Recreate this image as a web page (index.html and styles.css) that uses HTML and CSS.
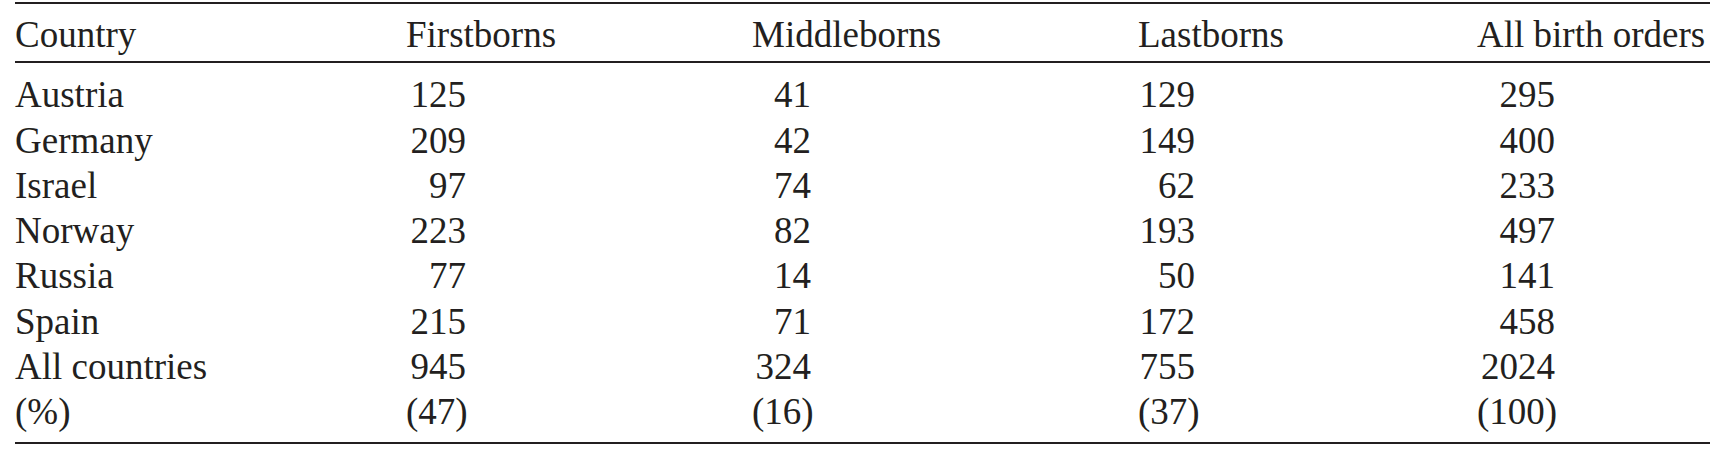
FILE: index.html
```html
<!DOCTYPE html>
<html lang="en">
<head>
<meta charset="utf-8">
<title>Birth order by country</title>
<link rel="stylesheet" href="styles.css">
</head>
<body>
<table class="data">
  <thead>
    <tr>
      <th class="c-country">Country</th>
      <th class="c-first">Firstborns</th>
      <th class="c-middle">Middleborns</th>
      <th class="c-last">Lastborns</th>
      <th class="c-all">All birth orders</th>
    </tr>
  </thead>
  <tbody>
    <tr class="first"><td class="c-country">Austria</td><td class="n-first">125</td><td class="n-middle">41</td><td class="n-last">129</td><td class="n-all">295</td></tr>
    <tr><td class="c-country">Germany</td><td class="n-first">209</td><td class="n-middle">42</td><td class="n-last">149</td><td class="n-all">400</td></tr>
    <tr><td class="c-country">Israel</td><td class="n-first">97</td><td class="n-middle">74</td><td class="n-last">62</td><td class="n-all">233</td></tr>
    <tr><td class="c-country">Norway</td><td class="n-first">223</td><td class="n-middle">82</td><td class="n-last">193</td><td class="n-all">497</td></tr>
    <tr><td class="c-country">Russia</td><td class="n-first">77</td><td class="n-middle">14</td><td class="n-last">50</td><td class="n-all">141</td></tr>
    <tr><td class="c-country">Spain</td><td class="n-first">215</td><td class="n-middle">71</td><td class="n-last">172</td><td class="n-all">458</td></tr>
    <tr><td class="c-country">All countries</td><td class="n-first">945</td><td class="n-middle">324</td><td class="n-last">755</td><td class="n-all">2024</td></tr>
    <tr class="last"><td class="c-country">(%)</td><td class="n-first">(47)</td><td class="n-middle">(16)</td><td class="n-last">(37)</td><td class="n-all">(100)</td></tr>
  </tbody>
</table>
</body>
</html>
```

FILE: styles.css
```css
html, body {
  margin: 0;
  padding: 0;
  background: #ffffff;
}

body {
  padding-top: 2px;
  padding-left: 15px;
  font-family: "Liberation Serif", "Times New Roman", serif;
  font-size: 37px;
  color: #231f20;
}

.data {
  width: 1695px;
  table-layout: fixed;
  border-collapse: separate;
  border-spacing: 0;
}

.data th,
.data td {
  padding: 0;
  line-height: 45.3px;
  font-weight: normal;
  white-space: nowrap;
  text-align: left;
  vertical-align: baseline;
}

.data thead th {
  border-top: 2px solid #231f20;
  border-bottom: 2px solid #231f20;
  padding-top: 8px;
  padding-bottom: 4px;
}

.c-country { width: 391px; }
.c-first { width: 346px; }
.c-middle { width: 386px; }
.c-last { width: 339px; }
.c-all { width: 233px; }

.data td.n-first,
.data td.n-middle,
.data td.n-last,
.data td.n-all {
  text-align: right;
}

.data td.n-first { padding-right: 286px; }
.data td.n-middle { padding-right: 327px; }
.data td.n-last { padding-right: 282px; }
.data td.n-all { padding-right: 155px; }

.data tr.first td {
  padding-top: 9px;
}

.data tr.last td {
  padding-bottom: 7px;
  border-bottom: 2px solid #231f20;
}
```
